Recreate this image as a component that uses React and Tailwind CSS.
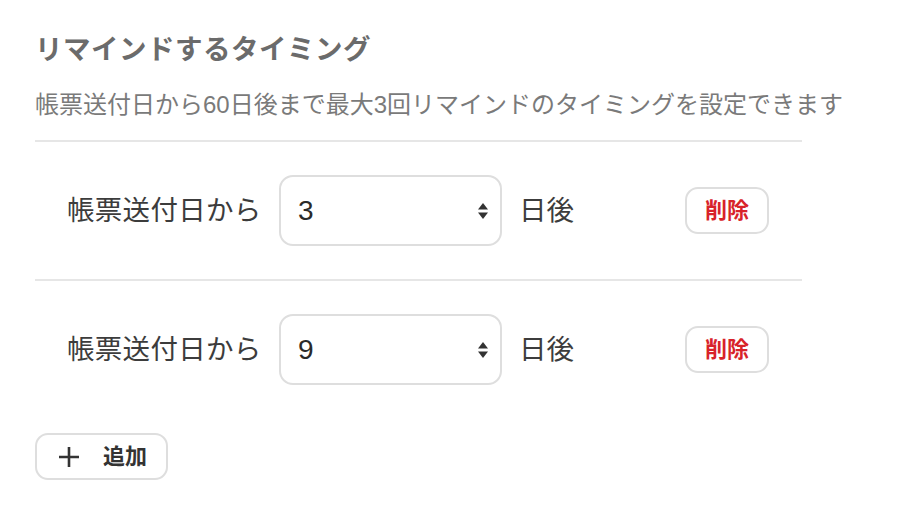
import React, { useState } from 'react';

const font = { fontFamily: '"Liberation Sans", "Noto Sans CJK JP", sans-serif' };

const SortArrows = () => (
  <svg width="12" height="18" viewBox="0 0 12 18" className="pointer-events-none">
    <path d="M6 1 L11 7.5 L1 7.5 Z" fill="#333" />
    <path d="M6 17 L11 10.5 L1 10.5 Z" fill="#333" />
  </svg>
);

const ReminderRow = ({ value, onChange, onDelete }) => (
  <div className="flex items-center pl-8 h-[137px]">
    <span className="text-[27.5px] text-[#3c3c3c] w-[212px] tracking-[0.3px]">帳票送付日から</span>
    <div className="relative w-[223px] h-[71px]">
      <select
        value={value}
        onChange={(e) => onChange(e.target.value)}
        className="appearance-none w-full h-full rounded-[14px] border-2 border-[#dedede] bg-white pl-[17px] text-[28px] text-[#2a2a2a] outline-none"
        style={font}
      >
        {Array.from({ length: 60 }, (_, i) => i + 1).map((n) => (
          <option key={n} value={n}>{n}</option>
        ))}
      </select>
      <div className="absolute right-[13px] top-1/2 -translate-y-1/2 flex">
        <SortArrows />
      </div>
    </div>
    <span className="ml-[17px] text-[27.5px] text-[#3c3c3c] w-[166px]">日後</span>
    <button
      onClick={onDelete}
      className="w-[84px] h-[47px] rounded-[13px] border-2 border-[#dedede] bg-white text-[22px] font-bold text-[#d8232a]"
    >
      削除
    </button>
  </div>
);

const App = () => {
  const [timings, setTimings] = useState(['3', '9']);

  const updateTiming = (idx, val) => {
    setTimings(timings.map((t, i) => (i === idx ? val : t)));
  };

  return (
    <div className="w-[914px] h-[522px] bg-white" style={font}>
      <div className="ml-[35px] w-[767px] pt-[30px]">
        <h2 className="text-[27.5px] font-bold text-[#6b6b6b] leading-[40px] tracking-[0.5px]">リマインドするタイミング</h2>
        <p className="mt-[20px] text-[24px] text-[#7a7a7a] leading-[30px] pb-[20px] border-b-2 border-[#e6e6e6] whitespace-nowrap">
          帳票送付日から60日後まで最大3回リマインドのタイミングを設定できます
        </p>

        {timings.map((t, i) => (
          <div key={i} className={i < timings.length - 1 ? 'border-b-2 border-[#e6e6e6]' : ''}>
            <ReminderRow
              value={t}
              onChange={(v) => updateTiming(i, v)}
              onDelete={() => setTimings(timings.filter((_, j) => j !== i))}
            />
          </div>
        ))}

        <button
          onClick={() => setTimings([...timings, '1'])}
          className="mt-[15px] flex items-center w-[133px] h-[47px] rounded-[13px] border-2 border-[#dedede] bg-white pl-[21px] text-[#333]"
        >
          <svg width="22" height="22" viewBox="0 0 22 22">
            <path d="M11 1 V21 M1 11 H21" stroke="#333" strokeWidth="2.6" />
          </svg>
          <span className="ml-[23px] text-[22px] font-bold">追加</span>
        </button>
      </div>
    </div>
  );
};

export default App;
